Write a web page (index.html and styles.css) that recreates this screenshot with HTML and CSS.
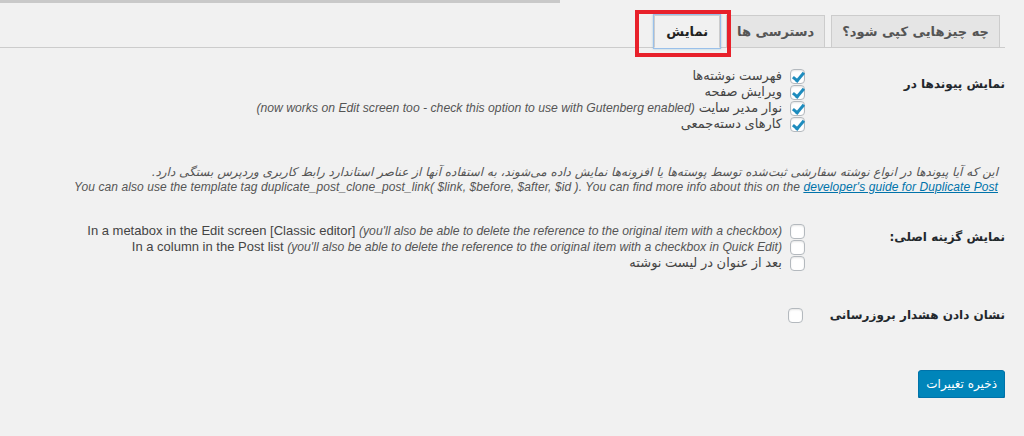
FILE: index.html
```html
<!DOCTYPE html>
<html lang="fa" dir="rtl">
  <head>
    <meta charset="UTF-8" />
    <meta name="viewport" content="width=device-width, initial-scale=1.0" />
    <title>تنظیمات</title>
    <link rel="stylesheet" href="styles.css">
  </head>

  <body>
    <div class="topbar"></div>

    <div class="wrap">
      <!-- تب ها -->
      <nav class="nav-tabs">
        <a class="nav-tab" href="#">چه چیزهایی کپی شود؟</a>
        <a class="nav-tab" href="#">دسترسی ها</a>
        <a class="nav-tab is-active" href="#">نمایش</a>
      </nav>

      <form class="settings">
        <div class="row row-links">
          <div class="row-label">نمایش پیوندها در</div>
          <ul class="row-field checks">
            <li><label><input type="checkbox" checked> فهرست نوشته‌ها</label></li>
            <li><label><input type="checkbox" checked> ویرایش صفحه</label></li>
            <li><label><input type="checkbox" checked> نوار مدیر سایت <em dir="ltr">(now works on Edit screen too - check this option to use with Gutenberg enabled)</em></label></li>
            <li><label><input type="checkbox" checked> کارهای دسته‌جمعی</label></li>
          </ul>
        </div>

        <div class="note">
          <p>این که آیا پیوندها در انواع نوشته سفارشی ثبت‌شده توسط پوسته‌ها یا افزونه‌ها نمایش داده می‌شوند، به استفاده آنها از عناصر استاندارد رابط کاربری وردپرس بستگی دارد.</p>
          <p dir="ltr" class="note-en">You can also use the template tag duplicate_post_clone_post_link( $link, $before, $after, $id ). You can find more info about this on the <a href="#">developer's guide for Duplicate Post</a></p>
        </div>

        <div class="row row-original">
          <div class="row-label">نمایش گزینه اصلی:</div>
          <ul class="row-field checks">
            <li><label><input type="checkbox"> <span dir="ltr">In a metabox in the Edit screen [Classic editor] <em>(you'll also be able to delete the reference to the original item with a checkbox)</em></span></label></li>
            <li><label><input type="checkbox"> <span dir="ltr">In a column in the Post list <em>(you'll also be able to delete the reference to the original item with a checkbox in Quick Edit)</em></span></label></li>
            <li><label><input type="checkbox"> بعد از عنوان در لیست نوشته</label></li>
          </ul>
        </div>

        <div class="row row-notice">
          <div class="row-label">نشان دادن هشدار بروزرسانی</div>
          <div class="row-field checks">
            <label><input type="checkbox"></label>
          </div>
        </div>

        <div class="submit">
          <button type="button" class="btn-primary">ذخیره تغییرات</button>
        </div>
      </form>
    </div>
  </body>
</html>
```

FILE: styles.css
```css
html,
body {
  margin: 0;
  padding: 0;
}

body {
  background: #f1f1f1;
  color: #444;
  font-family: "Liberation Sans", "DejaVu Sans", sans-serif;
  font-size: 13px;
  line-height: 16px;
}

ul,
li,
p {
  list-style: none;
  margin: 0;
  padding: 0;
}

/* نوار بالای صفحه */
.topbar {
  width: 560px;
  height: 3px;
  margin-right: auto;
  margin-left: 0;
  background: #c9c9c9;
}

.wrap {
  margin-right: 19px;
}

/* تب ها */
.nav-tabs {
  display: flex;
  padding: 12px 5px 0 0;
  border-bottom: 1px solid #ccc;
}

.nav-tab {
  position: relative;
  margin: 0 0 -1px 6px;
  padding: 6px 10px 6px;
  border: 1px solid #ccc;
  background: #e5e5e5;
  color: #555;
  font-family: "DejaVu Sans", sans-serif;
  font-size: 13px;
  font-weight: 600;
  line-height: 19px;
  text-decoration: none;
}

.nav-tab.is-active {
  padding: 6px 11px;
  background: #f1f1f1;
  border-bottom-color: #f1f1f1;
  color: #222;
  box-shadow: 0 0 0 1px #9ac0ea, 0 0 2px 1px rgba(30, 140, 190, 0.35);
}

/* کادر قرمز دور تب فعال */
.nav-tab.is-active::after {
  content: "";
  position: absolute;
  top: -6px;
  bottom: -10px;
  left: -20px;
  right: -12px;
  border: 4px solid #e8212b;
}

/* ردیف های فرم */
.row {
  display: flex;
}

.row-label {
  width: 200px;
  flex-shrink: 0;
  color: #23282d;
  font-family: "DejaVu Sans", sans-serif;
  font-size: 12px;
  font-weight: 600;
  line-height: 20px;
  white-space: nowrap;
}

.row-field {
  flex: 1;
}

.checks li,
.checks label {
  display: flex;
  align-items: center;
  height: 16px;
  white-space: nowrap;
}

.checks label {
  gap: 4px;
}

.checks em,
.note em {
  color: #555;
}

.checks em {
  font-family: "Liberation Sans", sans-serif;
  font-size: 12.2px;
}

/* چک باکس */
input[type="checkbox"] {
  appearance: none;
  -webkit-appearance: none;
  position: relative;
  width: 15px;
  height: 15px;
  margin: 0 0 0 4px;
  border: 1px solid #b4b9be;
  border-radius: 4px;
  background: #fff;
  box-shadow: inset 0 1px 2px rgba(0, 0, 0, 0.1);
  flex-shrink: 0;
}

input[type="checkbox"]:checked::before {
  content: "";
  position: absolute;
  top: 0;
  left: 4px;
  width: 4px;
  height: 9px;
  border-right: 3px solid #1e8cbe;
  border-bottom: 3px solid #1e8cbe;
  transform: rotate(40deg);
}

.row-links .row-label {
  padding-top: 26px;
}

.row-links .row-field {
  padding-top: 20px;
}

/* توضیحات */
.note {
  margin-top: 33px;
  padding-right: 7px;
  color: #555;
  font-style: italic;
  line-height: 15px;
}

.note p {
  text-align: right;
  font-family: "DejaVu Sans", sans-serif;
  font-size: 12px;
}

.note .note-en {
  font-family: "Liberation Sans", sans-serif;
  font-size: 12px;
  letter-spacing: 0.08px;
  text-align: right;
}

.note a {
  color: #0073aa;
}

.row-original {
  margin-top: 28px;
}

.row-original .row-label {
  padding-top: 4px;
}

.row-notice {
  margin-top: 34px;
}

.row-notice .row-field {
  padding-top: 2px;
}

.row-notice input[type="checkbox"] {
  margin-left: 0;
  margin-right: 2px;
}

/* دکمه ذخیره */
.submit {
  margin-top: 45px;
}

.btn-primary {
  height: 28px;
  padding: 0 7px;
  border: 1px solid #0073aa;
  border-radius: 3px;
  background: #0085ba;
  box-shadow: 0 1px 0 #006799;
  color: #fff;
  font-family: "DejaVu Sans", sans-serif;
  font-size: 12px;
  cursor: pointer;
}
```
